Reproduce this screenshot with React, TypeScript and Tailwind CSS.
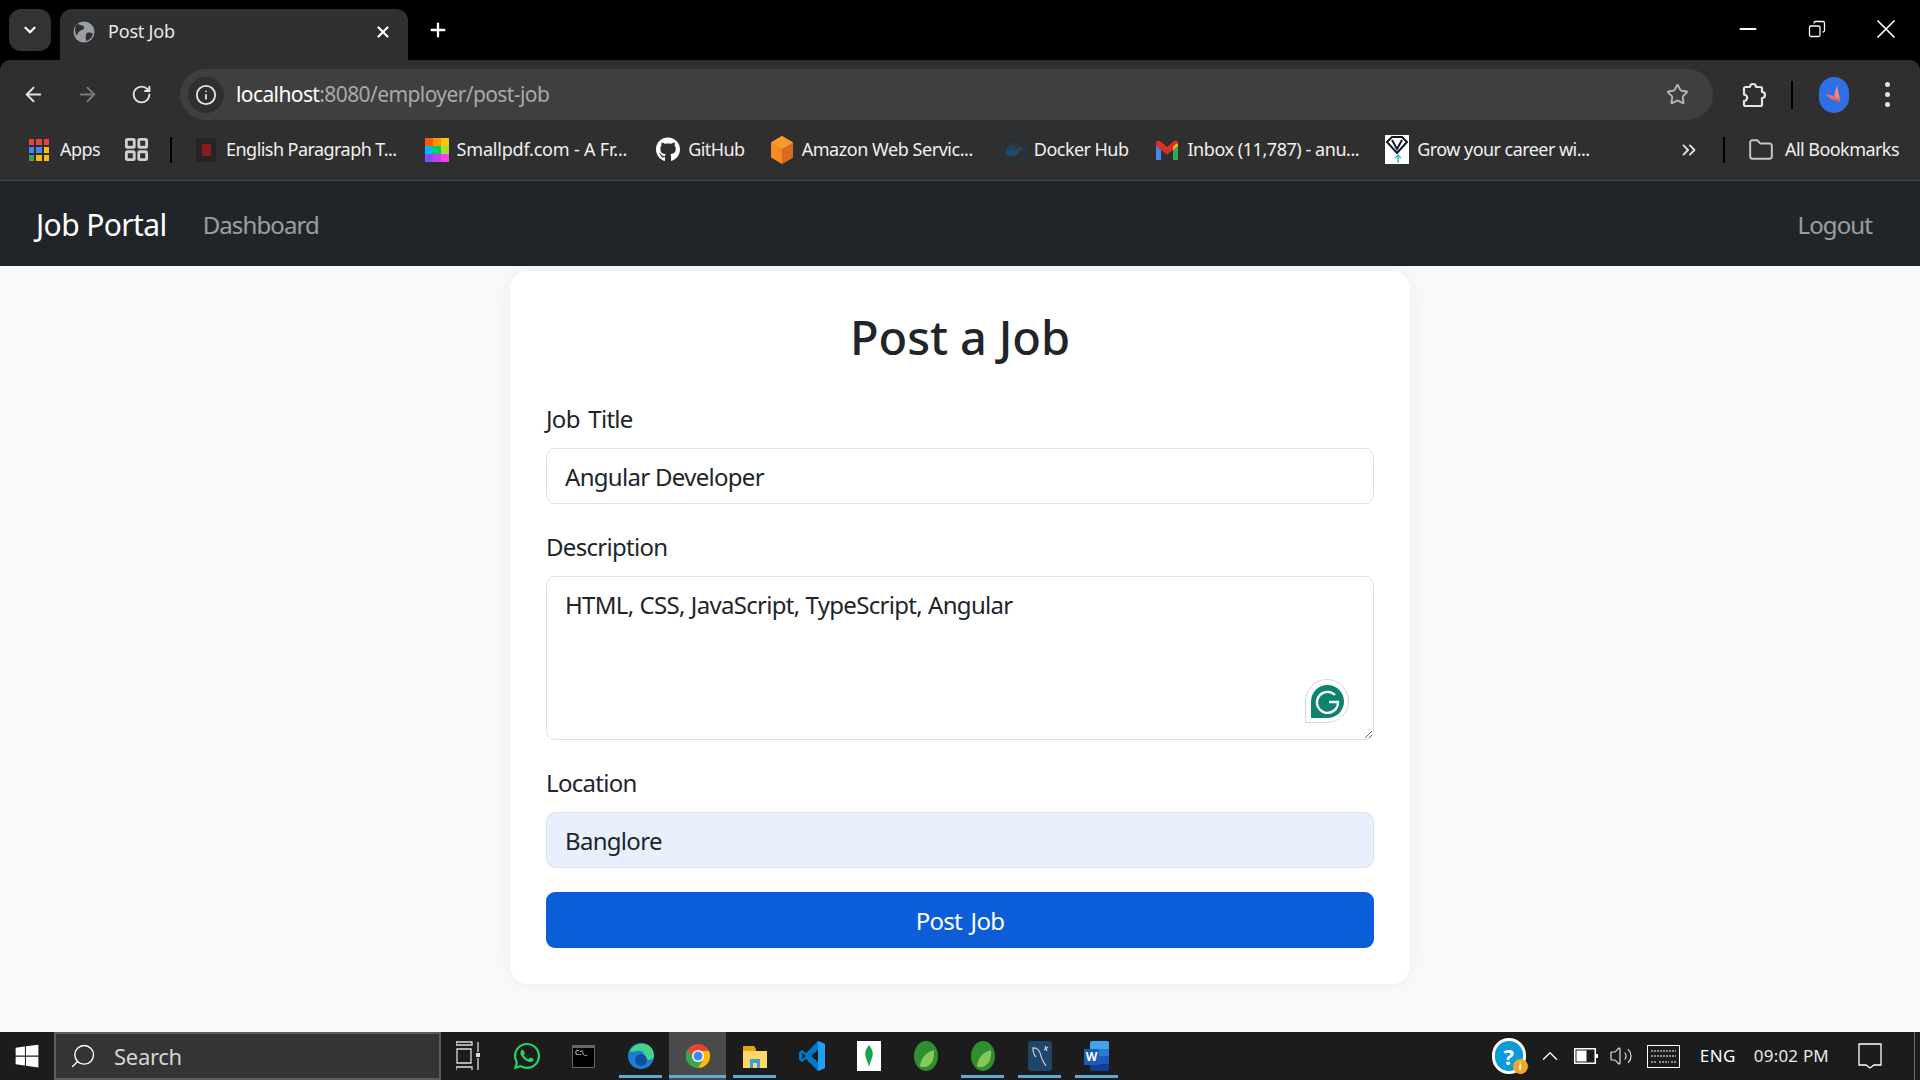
import React from 'react';
import { ArrowLeft, ArrowRight, ChevronDown, ChevronsRight, ChevronUp, Copy, Folder, Info, LayoutGrid, Minus, Plus, RotateCw, Search, Star, Volume2, X } from 'lucide-react';
import { FaGithub, FaWhatsapp, FaWindows } from 'react-icons/fa';
import { SiDocker } from 'react-icons/si';

const font = "font-['Noto_Sans','Liberation_Sans',sans-serif]";

function AppsIcon() {
  const colors = ['#ea4335', '#ea4335', '#ea4335', '#4285f4', '#4285f4', '#fbbc04', '#34a853', '#fbbc04', '#fbbc04'];
  return (
    <div className="grid grid-cols-3 gap-[2px] w-[20px] h-[22px]">
      {colors.map((c, i) => (
        <div key={i} style={{ backgroundColor: c }} />
      ))}
    </div>
  );
}

function SmallpdfIcon() {
  const colors = ['#ff5a00', '#ff9500', '#ffc800', '#00b4ff', '#00d060', '#a0e030', '#8050f0', '#c040f0', '#ff40e0'];
  return (
    <div className="grid grid-cols-3 w-[24px] h-[24px]">
      {colors.map((c, i) => (
        <div key={i} style={{ backgroundColor: c }} />
      ))}
    </div>
  );
}

function AwsIcon() {
  return (
    <svg width="24" height="30" viewBox="0 0 24 30">
      <path d="M12 1 23 7.500v15L12 29 1 22.500v-15z" fill="#f58a1f" />
      <path d="M12 14v15l11-6.500v-15z" fill="#d9691e" />
      <path d="M12 1 23 7.500 12 14 1 7.500z" fill="#fb9a2c" />
    </svg>
  );
}

function GmailIcon() {
  return (
    <svg width="24" height="20" viewBox="0 0 24 20">
      <path d="M1 20V3l5 4v13z" fill="#4285f4" />
      <path d="M18 20V7l5-4v17z" fill="#34a853" />
      <path d="M1 6V3c0-2 2-3.500 4-2l7 6 7-6c2-1.500 4 0 4 2v3l-5 4-6 4.500L6 10z" fill="#d93025" />
      <path d="M18 7l3-3c1-1 2 0 2 1v1l-5 4z" fill="#fbbc04" />
    </svg>
  );
}

function GrowIcon() {
  return (
    <svg width="24" height="29" viewBox="0 0 24 29">
      <rect width="24" height="29" fill="#fff" />
      <path d="M2 7l5-5h10l5 5-10 11z" fill="none" stroke="#101828" strokeWidth="2" />
      <path d="M7 5l5 9 5-9" fill="none" stroke="#101828" strokeWidth="2" />
      <path d="M13 28v-7M10 23l3-3 3 3" fill="none" stroke="#2cc6c6" strokeWidth="1.500" />
    </svg>
  );
}

function ExtensionIcon() {
  return (
    <svg width="26" height="26" viewBox="0 0 26 26" fill="none" stroke="#e3e3e3" strokeWidth="2.200" strokeLinejoin="round">
      <path d="M3 6.500a1.500 1.500 0 0 1 1.500-1.500H9a3 3 0 0 1 6 0h4.500A1.500 1.500 0 0 1 21 6.500V10a3 3 0 0 1 0 6v6.500a1.500 1.500 0 0 1-1.500 1.500h-15A1.500 1.500 0 0 1 3 22.500V19a3.200 3.200 0 0 0 0-6.400z" />
    </svg>
  );
}

function Bookmark({ icon, label, className }: { icon: React.ReactNode; label: string; className: string }) {
  return (
    <div className={`flex items-center shrink-0 ${className}`}>
      <div className="w-[24px] flex justify-center">{icon}</div>
      <span className="ml-[8px] whitespace-nowrap">{label}</span>
    </div>
  );
}

function BrowserChrome() {
  return (
    <div className={`bg-black ${font}`}>
      <div className="h-[60px] flex items-end pl-[9px] text-white">
        <div className="w-[42px] h-[42px] mb-[9px] rounded-[12px] bg-[#333333] flex items-center justify-center">
          <ChevronDown size={18} strokeWidth={3} />
        </div>
        <div className="ml-[9px] w-[348px] h-[51px] rounded-t-[12px] bg-[#303030] flex items-center pl-[13px] pr-[16px] pb-[6px]">
          <svg width="22" height="22" viewBox="0 0 22 22">
            <circle cx="11" cy="11" r="10.500" fill="#9aa0a6" />
            <path d="M4 3c3 1 6 1 7 3s-2 3-4 4-3 3-3 5c-2-3-3-8 0-12zM14 12c2-1 5 0 6 1-1 3-3 6-7 7 0-3-1-6 1-8z" fill="#303030" />
          </svg>
          <span className="ml-[13px] text-[18px] text-[#e8eaed] tracking-[-0.2px]">Post Job</span>
          <X size={18} strokeWidth={3} className="ml-auto" />
        </div>
        <Plus size={22} strokeWidth={2.500} className="ml-[19px] mb-[19px]" />
        <div className="ml-auto flex self-start h-[58px]">
          <div className="w-[69px] flex items-center justify-center"><Minus size={26} strokeWidth={1.700} /></div>
          <div className="w-[69px] flex items-center justify-center"><Copy size={18} strokeWidth={1.700} className="-scale-x-100" /></div>
          <div className="w-[69px] flex items-center justify-center"><X size={32} strokeWidth={1.300} /></div>
        </div>
      </div>
      <div className="h-[60px] bg-[#2f2f2f] rounded-t-[10px] flex items-end text-[#e3e3e3] pl-[22px]">
        <div className="h-[51px] flex items-center w-[158px] shrink-0">
          <ArrowLeft size={23} strokeWidth={2} />
          <ArrowRight size={23} strokeWidth={2} className="ml-[31px] text-[#7b7b7b]" />
          <RotateCw size={21} strokeWidth={2.200} className="ml-[32px]" />
        </div>
        <div className="w-[1533px] h-[51px] rounded-full bg-[#3f3f3f] flex items-center pl-[8px] pr-[24px] shrink-0">
          <div className="w-[36px] h-[36px] rounded-full bg-[#2f2f2f] flex items-center justify-center">
            <Info size={22} strokeWidth={2} />
          </div>
          <span className="ml-[12px] text-[21px] text-white tracking-[-0.6px]">
            localhost<span className="text-[#a9a9a9]">:8080/employer/post-job</span>
          </span>
          <Star size={23} strokeWidth={2} className="ml-auto text-[#b5b5b5]" />
        </div>
        <div className="h-[51px] flex items-center pl-[28px]">
          <ExtensionIcon />
          <div className="ml-[24px] w-[2px] h-[28px] bg-black" />
          <div className="ml-[26px] w-[30px] h-[36px] rounded-full bg-[#2f6fe4] flex items-center justify-center">
            <svg width="20" height="24" viewBox="0 0 20 24">
              <path d="M13 2l3 15-6-4z" fill="#f9877d" />
              <path d="M1 11l9 2 6 4-9-1z" fill="#ee6f66" />
              <path d="M7 16l9 1 1 3z" fill="#d95f5a" />
            </svg>
          </div>
          <div className="ml-[36px] flex flex-col gap-[5px]">
            <div className="w-[5px] h-[5px] rounded-full bg-[#e3e3e3]" />
            <div className="w-[5px] h-[5px] rounded-full bg-[#e3e3e3]" />
            <div className="w-[5px] h-[5px] rounded-full bg-[#e3e3e3]" />
          </div>
        </div>
      </div>
      <div className="h-[61px] bg-[#2f2f2f] border-b border-[#444444] flex items-center text-[18px] text-[#f1f1f1] tracking-[-0.55px] pb-[1px]">
        <div className="ml-[28px] w-[22px] flex justify-center"><AppsIcon /></div>
        <span className="ml-[10px]">Apps</span>
        <LayoutGrid size={27} strokeWidth={2.500} className="ml-[23px] text-[#d0d0d0]" />
        <div className="ml-[20px] w-[2px] h-[26px] bg-black" />
        <Bookmark className="ml-[22px]" label="English Paragraph T..." icon={
          <div className="w-[20px] h-[24px] bg-[#252525] flex items-center justify-center"><div className="w-[9px] h-[12px] bg-[#8b1a22]" /></div>
        } />
        <Bookmark className="ml-[28px] tracking-[-0.2px]" label="Smallpdf.com - A Fr..." icon={<SmallpdfIcon />} />
        <Bookmark className="ml-[29px]" label="GitHub" icon={<FaGithub size={25} color="#fff" />} />
        <Bookmark className="ml-[25px] tracking-[-0.45px]" label="Amazon Web Servic..." icon={<AwsIcon />} />
        <Bookmark className="ml-[29px]" label="Docker Hub" icon={
          <div className="w-[24px] h-[28px] rounded-full border border-[#1d3e57] flex items-center justify-center"><SiDocker size={18} color="#1f4a6b" /></div>
        } />
        <Bookmark className="ml-[27px] tracking-[-0.45px]" label="Inbox (11,787) - anu..." icon={<GmailIcon />} />
        <Bookmark className="ml-[26px]" label="Grow your career wi..." icon={<GrowIcon />} />
        <ChevronsRight size={22} strokeWidth={2} className="absolute left-[1678px] text-[#e3e3e3]" />
        <div className="absolute left-[1723px] w-[2px] h-[26px] bg-black" />
        <div className="absolute left-[1748px] flex items-center">
          <Folder size={26} strokeWidth={1.800} className="text-[#c7c7c7]" />
          <span className="ml-[11px] whitespace-nowrap">All Bookmarks</span>
        </div>
      </div>
    </div>
  );
}

function Navbar() {
  return (
    <nav className={`h-[85px] bg-[#212529] flex items-center pl-[36px] pr-[48px] pt-[2px] ${font}`}>
      <span className="text-[30px] text-white tracking-[-0.6px]">Job Portal</span>
      <span className="ml-[36px] text-[24px] text-white/55 tracking-[-0.9px]">Dashboard</span>
      <span className="ml-auto text-[24px] text-white/55 tracking-[-0.9px]">Logout</span>
    </nav>
  );
}

function GrammarlyBadge() {
  return (
    <div className="absolute right-[25px] bottom-[17px] w-[44px] h-[44px] rounded-[22px] rounded-bl-none border-[1.500px] border-[#d5d6e0] bg-white flex items-center justify-center">
      <div className="w-[33px] h-[33px] rounded-full rounded-bl-none bg-[#0f8270] flex items-center justify-center">
        <svg width="25" height="25" viewBox="0 0 25 25" fill="none" stroke="#fff" strokeWidth="2.400">
          <path d="M20 6a10.500 10.500 0 1 0 3 7h-9" />
        </svg>
      </div>
    </div>
  );
}

const inputClass = 'w-full h-[56px] rounded-[9px] border-[1.500px] border-[#dee2e6] px-[18px] text-[24px] text-[#212529] tracking-[-0.7px] outline-none';
const labelClass = 'block h-[36px] leading-[38px] mb-[12px] text-[24px] text-[#212529] tracking-[-0.7px] [word-spacing:3px]';

function PostJobForm() {
  return (
    <main className={`flex-1 bg-[#f8f9fa] flex justify-center pt-[5px] min-h-0 ${font}`}>
      <div className="w-[900px] h-[713px] bg-white rounded-[18px] p-[36px] shadow-[0_0_18px_rgba(0,0,0,0.05)]">
        <h1 className="h-[62px] leading-[60px] mb-[31px] text-center text-[47px] font-medium text-[#212529] tracking-[-0.1px]">Post a Job</h1>
        <label className={labelClass}>Job Title</label>
        <input className={`${inputClass} mb-[24px] bg-white`} value="Angular Developer" readOnly />
        <label className={labelClass}>Description</label>
        <div className="relative mb-[24px] h-[164px]">
          <textarea
            className="block w-full h-[164px] rounded-[9px] border-[1.500px] border-[#dee2e6] px-[18px] py-[10px] text-[24px] leading-[36px] text-[#212529] tracking-[-0.7px] [word-spacing:0.6px] outline-none"
            value="HTML, CSS, JavaScript, TypeScript, Angular"
            readOnly
          />
          <GrammarlyBadge />
        </div>
        <label className={labelClass}>Location</label>
        <input className={`${inputClass} mb-[24px] bg-[#e8f0fe]`} value="Banglore" readOnly />
        <button className="w-full h-[56px] pt-[2px] rounded-[9px] bg-[#0b5ed7] text-white text-[24px] tracking-[-0.7px] [word-spacing:3px]">Post Job</button>
      </div>
    </main>
  );
}

function TaskCell({ children, on, active }: { children: React.ReactNode; on?: boolean; active?: boolean }) {
  return (
    <div className={`relative w-[57px] h-[48px] flex items-center justify-center shrink-0 ${active ? 'bg-[#4a4a4a]' : ''}`}>
      {children}
      {on && <div className={`absolute bottom-[2px] h-[3px] bg-[#63a8d8] ${active ? 'inset-x-0' : 'inset-x-[7px]'}`} />}
    </div>
  );
}

function Leaf() {
  return (
    <svg width="24" height="30" viewBox="0 0 24 30">
      <ellipse cx="12" cy="15" rx="12" ry="15" fill="#2f8f2f" />
      <path d="M6 25c1-9 7-14 14-16 1 9-3 17-10 17-2 0-3 0-4-1z" fill="#86c85a" />
    </svg>
  );
}

function Taskbar() {
  return (
    <footer className={`h-[48px] bg-[#1c1c1c] flex items-center text-white shrink-0 ${font}`}>
      <div className="w-[54px] flex justify-center"><FaWindows size={26} /></div>
      <div className="w-[387px] h-[48px] bg-[#343434] border-2 border-[#5c5c5c] flex items-center pl-[13px]">
        <Search size={28} strokeWidth={1.200} className="-scale-x-100" />
        <span className="ml-[17px] text-[22px] text-[#d6d6d6] tracking-[-0.3px]">Search</span>
      </div>
      <div className="flex">
        <TaskCell>
          <svg width="24" height="30" viewBox="0 0 24 30" fill="none" stroke="#dddddd" strokeWidth="1.300" className="mr-[4px]">
            <path d="M0 1h16v3H0zM1 8h14v14H1zM0 29v-3h16v3" />
            <path d="M22 1v10M22 17v12" />
            <rect x="20" y="12" width="4" height="4" fill="#dddddd" stroke="none" />
          </svg>
        </TaskCell>
        <TaskCell><FaWhatsapp size={30} color="#25d366" /></TaskCell>
        <TaskCell>
          <div className="w-[23px] h-[23px] bg-black border border-[#666666] border-t-[3px] text-[7px] leading-[10px] pl-[2px]">C:\_</div>
        </TaskCell>
        <TaskCell on>
          <svg width="26" height="30" viewBox="0 0 26 26">
            <circle cx="13" cy="13" r="13" fill="#1a7fd0" />
            <path d="M2 8C5 1 14-1 20 2c4 2 6 7 6 11 0 3-3 4-6 4-3 0-4-1-4-3 2-4-3-7-7-6-3 0-6 2-7 0z" fill="#46d28c" />
            <circle cx="13" cy="17" r="6" fill="#0d4f9c" />
          </svg>
        </TaskCell>
        <TaskCell on active>
          <svg width="24" height="30" viewBox="0 0 24 24">
            <circle cx="12" cy="12" r="12" fill="#ea4335" />
            <path d="M12 24a12 12 0 0 0 12-12c0-2-.500-3.500-1-5H12l5 8z" fill="#fbbc04" />
            <path d="M12 24 17 15H7L2 5a12 12 0 0 0 10 19z" fill="#34a853" />
            <circle cx="12" cy="12" r="6" fill="#fff" />
            <circle cx="12" cy="12" r="4.500" fill="#4285f4" />
          </svg>
        </TaskCell>
        <TaskCell on>
          <svg width="24" height="24" viewBox="0 0 24 24">
            <path d="M0 2h11l2 3v4H0z" fill="#e5a50a" />
            <path d="M0 7h24v17H0z" fill="#fcd667" />
            <path d="M7 24v-9h10v9h-3v-5h-4v5z" fill="#3b9ddd" />
          </svg>
        </TaskCell>
        <TaskCell>
          <svg width="26" height="30" viewBox="0 0 26 30">
            <path d="M19 0l7 3v24l-7 3L7 18l-4 3-3-2V11l3-2 4 3z" fill="#0078c8" />
            <path d="M19 0l7 3v24l-7 3z" fill="#1ea0f0" />
            <path d="M19 9l-7 6 7 6z" fill="#1c1c1c" />
            <path d="M3 12l4 3-4 3z" fill="#1c1c1c" />
          </svg>
        </TaskCell>
        <TaskCell>
          <div className="w-[24px] h-[30px] bg-white flex items-center justify-center">
            <svg width="8" height="22" viewBox="0 0 8 22"><path d="M4 0c3 4 5 8 3 13-1 3-2 5-3 9-1-4-2-6-3-9C-1 8 1 4 4 0z" fill="#13a74b" /></svg>
          </div>
        </TaskCell>
        <TaskCell><Leaf /></TaskCell>
        <TaskCell on><Leaf /></TaskCell>
        <TaskCell on>
          <div className="w-[24px] h-[30px] rounded-[3px] bg-[#1d4668] flex items-center justify-center">
            <svg width="20" height="24" viewBox="0 0 20 24" fill="none" stroke="#c6d2dc" strokeWidth="1.200">
              <path d="M2 4c5-1 8 3 9 8s3 6 5 10M3 4c0 4 1 7 3 9M15 2l2 5M18 3l-4 3" />
            </svg>
          </div>
        </TaskCell>
        <TaskCell on>
          <div className="relative w-[25px] h-[30px]">
            <div className="absolute right-0 top-0 w-[19px] h-[30px] rounded-[2px] flex flex-col overflow-hidden">
              <div className="flex-1 bg-[#41a5ee]" />
              <div className="flex-1 bg-[#2b7cd3]" />
              <div className="flex-1 bg-[#185abd]" />
              <div className="flex-1 bg-[#103f91]" />
            </div>
            <div className="absolute left-0 top-[8px] w-[15px] h-[16px] bg-[#1a5ab8] text-[12px] leading-[16px] font-bold text-center">W</div>
          </div>
        </TaskCell>
      </div>
      <div className="ml-auto flex items-center h-[48px]">
        <div className="relative w-[34px] h-[36px] rounded-full bg-[#0a9bdc] border-[3px] border-white flex items-center justify-center text-[22px] font-bold">
          ?
          <div className="absolute -right-[5px] -bottom-[3px] w-[15px] h-[15px] rounded-full bg-[#f5a623] text-[10px] leading-[15px] text-center">i</div>
        </div>
        <ChevronUp size={26} strokeWidth={1.200} className="ml-[11px]" />
        <svg width="24" height="16" viewBox="0 0 24 16" fill="none" className="ml-[11px]">
          <rect x=".75" y=".75" width="20.500" height="14.500" stroke="#fff" strokeWidth="1.500" />
          <rect x="2.500" y="2.500" width="10" height="11" fill="#fff" />
          <rect x="22" y="6" width="2" height="4" fill="#fff" />
        </svg>
        <Volume2 size={24} strokeWidth={1.200} className="ml-[11px] text-[#dddddd]" />
        <svg width="33" height="23" viewBox="0 0 33 23" fill="none" stroke="#fff" className="ml-[14px]">
          <rect x=".5" y=".5" width="32" height="22" />
          <path d="M4 6h25M4 11h25M4 17h6M12 17h10M24 17h5" strokeDasharray="2 1" />
        </svg>
        <span className="ml-[20px] text-[17px] tracking-[0.4px]">ENG</span>
        <span className="ml-[18px] text-[17px] text-[#e8e8e8] tracking-[0.2px]">09:02 PM</span>
        <svg width="24" height="26" viewBox="0 0 24 26" fill="none" stroke="#fff" strokeWidth="1.300" className="ml-[29px]">
          <path d="M1 1h22v21h-7l-4 3-4-3H1z" />
        </svg>
        <div className="ml-[32px] mr-[5px] w-[1px] h-[48px] bg-[#666666]" />
      </div>
    </footer>
  );
}

export default function App() {
  return (
    <div className="relative h-screen overflow-hidden flex flex-col">
      <BrowserChrome />
      <Navbar />
      <PostJobForm />
      <Taskbar />
    </div>
  );
}
